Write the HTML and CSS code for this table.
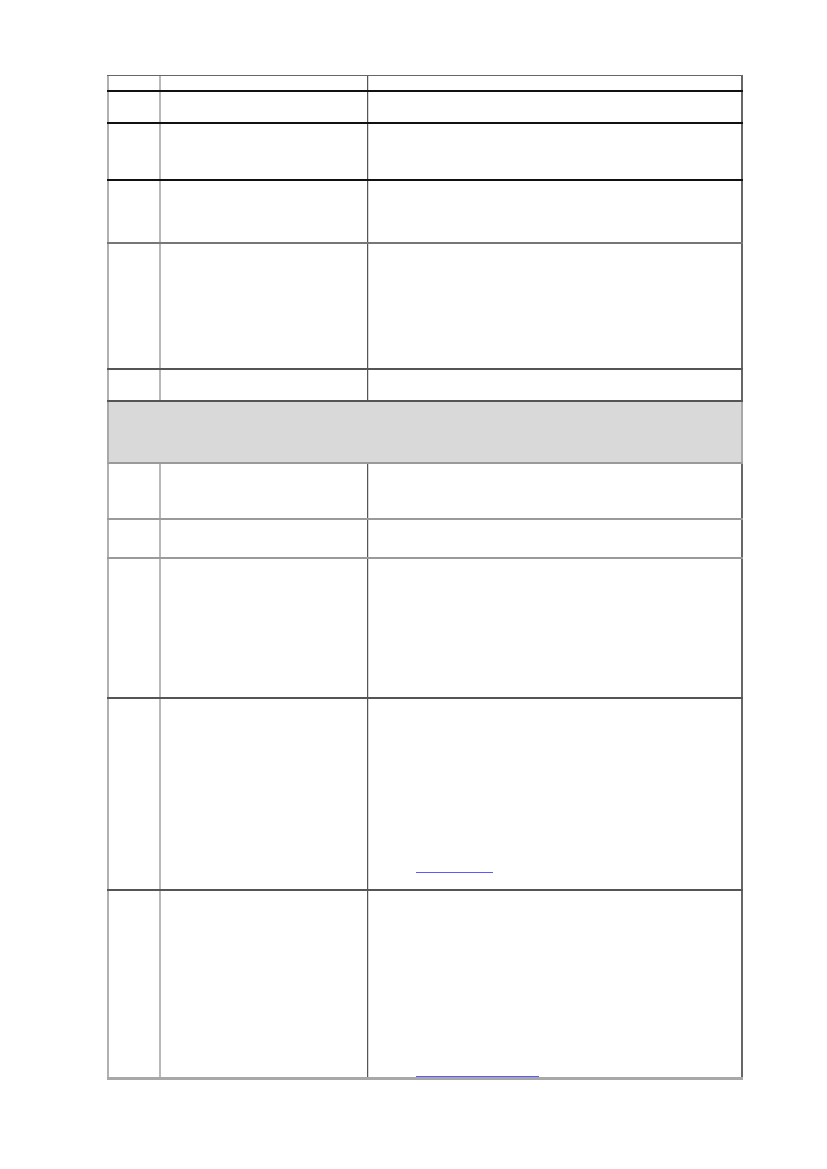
FILE: index.html
```html
<!DOCTYPE html>
<html>
<head>
<meta charset="utf-8">
<link rel="stylesheet" href="styles.css">
</head>
<body>
<div class="table">
  <div class="row h17 top b-black"><div class="c c1"></div><div class="c c2"></div><div class="c c3"></div></div>
  <div class="row h32 b-black"><div class="c c1"></div><div class="c c2"></div><div class="c c3"></div></div>
  <div class="row h57 b-black"><div class="c c1"></div><div class="c c2"></div><div class="c c3"></div></div>
  <div class="row h63 b-gray"><div class="c c1"></div><div class="c c2"></div><div class="c c3"></div></div>
  <div class="row h126 b-dark"><div class="c c1"></div><div class="c c2"></div><div class="c c3"></div></div>
  <div class="row h32 b-dark"><div class="c c1"></div><div class="c c2"></div><div class="c c3"></div></div>
  <div class="band"></div>
  <div class="row h56 b-light"><div class="c c1"></div><div class="c c2"></div><div class="c c3"></div></div>
  <div class="row h39 b-light"><div class="c c1"></div><div class="c c2"></div><div class="c c3"></div></div>
  <div class="row h140 b-dark"><div class="c c1"></div><div class="c c2"></div><div class="c c3"></div></div>
  <div class="row h192 b-dark"><div class="c c1"></div><div class="c c2"></div><div class="c c3 linkcell pb17"><a class="link w77" href="#"></a></div></div>
  <div class="row h189 b-light last"><div class="c c1"></div><div class="c c2"></div><div class="c c3 linkcell pb2"><a class="link w123" href="#"></a></div></div>
</div>
</body>
</html>
```
FILE: styles.css
```css
html, body {
  margin: 0;
  padding: 0;
  background: #ffffff;
  font-family: "Liberation Sans", Arial, sans-serif;
}
.table {
  margin-left: 107px;
  margin-top: 75px;
  width: 636px;
  display: flex;
  flex-direction: column;
}
.row {
  display: grid;
  grid-template-columns: 54px 207px 375px;
  box-sizing: border-box;
  border-bottom: 1px solid #000;
}
.row.top { border-top: 1px solid #666; }
.b-black { border-bottom: 2px solid #111; }
.b-gray { border-bottom: 2px solid #777; }
.b-dark { border-bottom: 2px solid #555; }
.b-light { border-bottom: 2px solid #9a9a9a; }
.row.last { border-bottom: 3px solid #a8a8a8; }
.h17 { height: 17px; }
.h32 { height: 32px; }
.h39 { height: 39px; }
.h56 { height: 56px; }
.h57 { height: 57px; }
.h63 { height: 63px; }
.h126 { height: 126px; }
.h140 { height: 140px; }
.h189 { height: 189px; }
.h192 { height: 192px; }
.c {
  box-sizing: border-box;
}
.c1 {
  border-left: 2px solid #b0b0b0;
  border-right: 2px solid #b8b8b8;
}
.c2 {
  border-right: 1px solid #555;
}
.c3 {
  border-left: 1px solid #d8d8d8;
  border-right: 2px solid #666;
}
.band {
  height: 62px;
  box-sizing: border-box;
  background: #d9d9d9;
  border-left: 2px solid #a8a8a8;
  border-right: 2px solid #a8a8a8;
  border-bottom: 2px solid #9a9a9a;
}
.linkcell {
  display: flex;
  flex-direction: column;
  justify-content: flex-end;
  align-items: flex-start;
  padding-left: 47px;
}
.pb17 { padding-bottom: 16px; }
.pb2 { padding-bottom: 0px; }
.link {
  display: block;
  height: 0;
  border-bottom: 1px solid #5a5aff;
}
.w77 { width: 77px; }
.w123 { width: 123px; }
```
